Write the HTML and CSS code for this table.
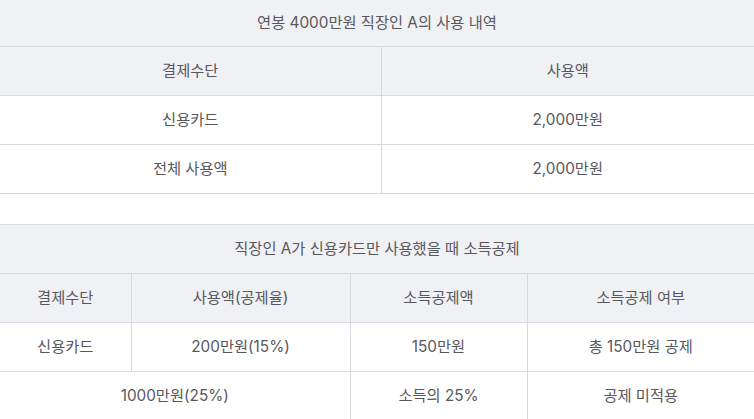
FILE: index.html
```html
<!DOCTYPE html>
<html lang="ko">
<head>
<meta charset="utf-8">
<link rel="stylesheet" href="styles.css">
</head>
<body>
<div class="page">
  <table class="tbl tbl-a">
    <colgroup><col class="c-a1"><col class="c-a2"></colgroup>
    <thead>
      <tr class="title-row first"><th colspan="2">연봉 4000만원 직장인 A의 사용 내역</th></tr>
      <tr class="head-row"><th>결제수단</th><th>사용액</th></tr>
    </thead>
    <tbody>
      <tr><td>신용카드</td><td>2,000만원</td></tr>
      <tr><td>전체 사용액</td><td>2,000만원</td></tr>
    </tbody>
  </table>

  <table class="tbl tbl-b">
    <colgroup><col class="c-b1"><col class="c-b2"><col class="c-b3"><col class="c-b4"></colgroup>
    <thead>
      <tr class="title-row"><th colspan="4">직장인 A가 신용카드만 사용했을 때 소득공제</th></tr>
      <tr class="head-row"><th>결제수단</th><th>사용액(공제율)</th><th>소득공제액</th><th>소득공제 여부</th></tr>
    </thead>
    <tbody>
      <tr><td>신용카드</td><td>200만원(15%)</td><td>150만원</td><td>총 150만원 공제</td></tr>
      <tr><td colspan="2">1000만원(25%)</td><td>소득의 25%</td><td>공제 미적용</td></tr>
    </tbody>
  </table>
</div>
</body>
</html>
```
FILE: styles.css
```css
html, body {
  margin: 0;
  padding: 0;
  background: #ffffff;
}
body {
  font-family: Inter, "Noto Sans CJK KR", sans-serif;
  font-size: 15.3px;
  color: #58585c;
}
.page {
  display: flex;
  flex-direction: column;
  gap: 30px;
}
.tbl {
  width: 100%;
  border-collapse: collapse;
  table-layout: fixed;
}
.tbl th, .tbl td {
  height: 48px;
  padding: 0 8px;
  text-align: center;
  vertical-align: middle;
  font-weight: 400;
  border: 1px solid #d7d9de;
  line-height: 20px;
}
.tbl tr > :first-child { border-left: none; }
.tbl tr > :last-child { border-right: none; }
.tbl thead th {
  background: #f0f1f5;
}
.tbl-a .first th {
  border-top: none;
  height: 46px;
}
.c-a1 { width: 381px; }
.c-a2 { width: auto; }
.c-b1 { width: 131px; }
.c-b2 { width: 219px; }
.c-b3 { width: 177px; }
.c-b4 { width: auto; }
```
